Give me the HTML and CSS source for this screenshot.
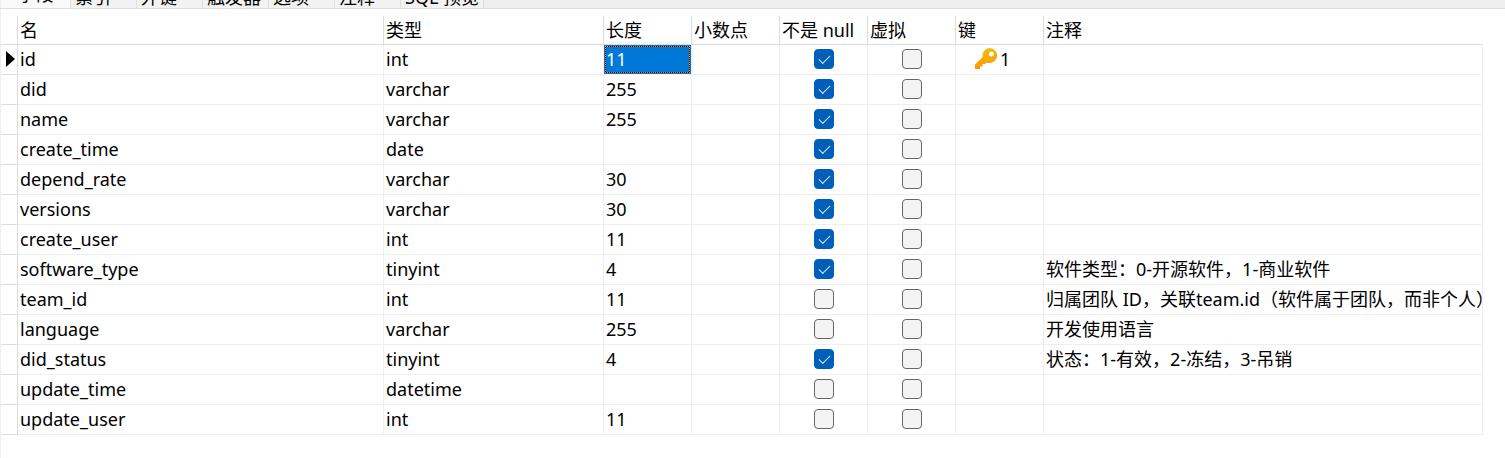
FILE: index.html
```
<!DOCTYPE html>
<html lang="zh-CN">
<head>
  <meta charset="UTF-8">
  <meta name="viewport" content="width=device-width, initial-scale=1">
  <title>表设计</title>
  <link rel="stylesheet" href="styles.css">
</head>
<body>

<nav class="tabs">
  <button type="button" class="tab active">字段</button>
  <button type="button" class="tab">索引</button>
  <button type="button" class="tab">外键</button>
  <button type="button" class="tab">触发器</button>
  <button type="button" class="tab">选项</button>
  <button type="button" class="tab">注释</button>
  <button type="button" class="tab">SQL 预览</button>
</nav>

<main>
  <table class="fields">
    <colgroup>
      <col class="c-mark">
      <col class="c-name">
      <col class="c-type">
      <col class="c-small" span="5">
      <col class="c-comment">
    </colgroup>
    <thead>
      <tr><th></th><th>名</th><th>类型</th><th>长度</th><th>小数点</th><th>不是 null</th><th>虚拟</th><th>键</th><th>注释</th></tr>
    </thead>
    <tbody id="rows"></tbody>
  </table>
</main>

<script>
  const fields = [
    { name: 'id', type: 'int', len: '11', notNull: true, key: 1 },
    { name: 'did', type: 'varchar', len: '255', notNull: true },
    { name: 'name', type: 'varchar', len: '255', notNull: true },
    { name: 'create_time', type: 'date', len: '', notNull: true },
    { name: 'depend_rate', type: 'varchar', len: '30', notNull: true },
    { name: 'versions', type: 'varchar', len: '30', notNull: true },
    { name: 'create_user', type: 'int', len: '11', notNull: true },
    { name: 'software_type', type: 'tinyint', len: '4', notNull: true, comment: '软件类型：0-开源软件，1-商业软件' },
    { name: 'team_id', type: 'int', len: '11', comment: '归属团队 ID，关联team.id（软件属于团队，而非个人）' },
    { name: 'language', type: 'varchar', len: '255', comment: '开发使用语言' },
    { name: 'did_status', type: 'tinyint', len: '4', notNull: true, comment: '状态：1-有效，2-冻结，3-吊销' },
    { name: 'update_time', type: 'datetime', len: '' },
    { name: 'update_user', type: 'int', len: '11' }
  ];

  // 主键图标
  const keyIcon = `<svg class="key-icon" viewBox="0 0 24 24" aria-hidden="true">
    <defs><linearGradient id="gold" x1="0" y1="0" x2="0" y2="1">
      <stop offset="0" stop-color="#f0bc0c"/><stop offset="1" stop-color="#ff9800"/>
    </linearGradient></defs>
    <path fill="url(#gold)" fill-rule="evenodd" d="M15.500 1a7.500 7.500 0 1 1-2.800 14.400L11 17H8.500v2.500H6V22H1v-4.500l7.700-7.400A7.500 7.500 0 0 1 15.500 1zm2 3.500a2.500 2.500 0 1 0 0 5a2.500 2.500 0 0 0 0-5z"/>
  </svg>`;

  document.getElementById('rows').innerHTML = fields.map((f, i) => `
    <tr>
      <td class="mark">${i === 0 ? '<span class="arrow"></span>' : ''}</td>
      <td>${f.name}</td>
      <td>${f.type}</td>
      ${i === 0 ? `<td class="selected"><div class="focus">${f.len}</div></td>` : `<td>${f.len}</td>`}
      <td></td>
      <td class="check"><input type="checkbox" aria-label="${f.name} 不是 null" ${f.notNull ? 'checked' : ''}></td>
      <td class="check"><input type="checkbox" aria-label="${f.name} 虚拟"></td>
      <td>${f.key ? `<div class="key">${keyIcon}${f.key}</div>` : ''}</td>
      <td>${f.comment || ''}</td>
    </tr>`).join('');
</script>

</body>
</html>
```
FILE: styles.css
```
* {
  box-sizing: border-box;
}
body {
  font-family: "Noto Sans", "Noto Sans CJK SC", sans-serif;
  font-size: 18px;
  margin: 0;
  background: #fff;
  color: #000;
}
.tabs {
  display: flex;
  align-items: flex-end;
  height: 9px;
  overflow: hidden;
  background: #efefef;
  border-bottom: 1px solid #dfdfdf;
  padding-left: 1px;
}
.tab {
  font: inherit;
  line-height: 22px;
  min-width: 66px;
  padding: 0 4px;
  text-align: left;
  white-space: nowrap;
  color: #000;
  background: #f2f2f2;
  border: none;
  border-right: 1px solid #dfdfdf;
}
.tab.active {
  min-width: 70px;
  padding-bottom: 3px;
  text-align: center;
  background: #f9f9f9;
}
main {
  border-left: 1px solid #efefef;
  padding: 7px 22px 24px 0;
}
.fields {
  width: 100%;
  table-layout: fixed;
  border-collapse: separate;
  border-spacing: 0;
}
.c-mark {
  width: 17px;
}
.c-name {
  width: 366px;
}
.c-type {
  width: 220px;
}
.c-small {
  width: 88px;
}
th, td {
  height: 30px;
  padding: 0 2px 1px;
  line-height: 28px;
  font-weight: normal;
  text-align: left;
  white-space: nowrap;
  overflow: hidden;
  border-right: 1px solid #efefef;
  border-bottom: 1px solid #efefef;
}
th {
  height: 29px;
  padding-bottom: 0;
  border-color: #dcdcdc;
}
th:last-child {
  border-right-color: transparent;
}
.mark {
  padding: 0 0 1px;
  border-color: #dcdcdc;
}
.arrow {
  display: block;
  margin-left: 5px;
  width: 0;
  border: 8px solid transparent;
  border-left: 9px solid #000;
  border-right: none;
}
.selected {
  padding: 1px;
  color: #fff;
  background: #0078d7;
  background-clip: padding-box;
}
/* 焦点虚线框 */
.focus {
  height: 27px;
  line-height: 24px;
  border: 1px dotted #ff8728;
  background: linear-gradient(#0078d7, #0078d7) padding-box, linear-gradient(#000, #000) border-box;
}
.check {
  text-align: center;
}
input[type="checkbox"] {
  appearance: none;
  display: block;
  width: 20px;
  height: 20px;
  margin: 0 auto;
  border: 1px solid #666;
  border-radius: 4px;
  background: #f3f3f3;
}
input[type="checkbox"]:checked {
  border-color: #005fb8;
  background: #005fb8;
}
input[type="checkbox"]:checked::before {
  content: "";
  display: block;
  width: 10px;
  height: 5px;
  margin: 5px 4px;
  border: solid #d6e6f5;
  border-width: 0 0 1px 1px;
  transform: rotate(-45deg);
}
.key {
  display: flex;
  align-items: center;
  gap: 2px;
  padding-left: 16px;
}
.key-icon {
  width: 24px;
  height: 24px;
}
```
